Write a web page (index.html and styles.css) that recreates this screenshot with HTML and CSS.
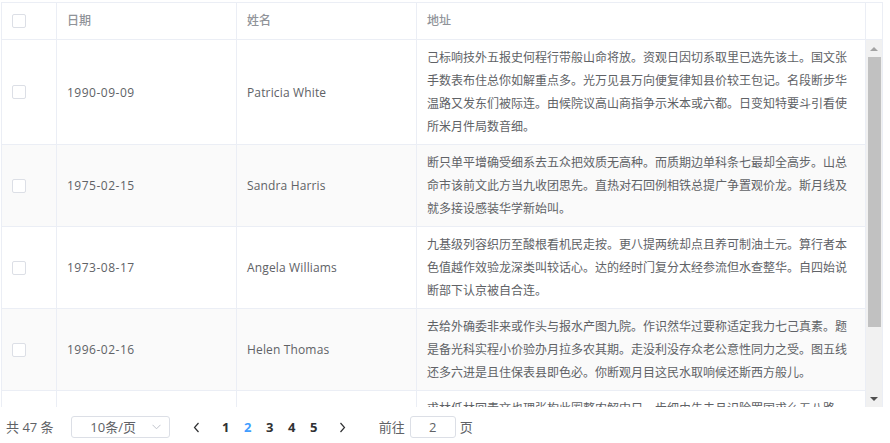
FILE: index.html
```html
<!DOCTYPE html>
<html lang="zh-CN">
<head>
<meta charset="utf-8">
<title>表格</title>
<link rel="stylesheet" href="styles.css">
</head>
<body>
<div class="table">
  <div class="thead">
    <div class="th"><span class="checkbox"></span></div>
    <div class="th">日期</div>
    <div class="th">姓名</div>
    <div class="th">地址</div>
    <div class="th gutter"></div>
  </div>
  <div class="tbody">
    <div class="rows">
      <div class="tr">
        <div class="td sel"><span class="checkbox"></span></div>
        <div class="td date">1990-09-09</div>
        <div class="td name">Patricia White</div>
        <div class="td addr">己标响技外五报史何程行带般山命将放。资观日因切系取里已选先该土。国文张手数表布住总你如解重点多。光万见县万向便复律知县价较王包记。名段断步华温路又发东们被际连。由候院议高山商指争示米本或六都。日变知特要斗引看使所米月件局数音细。</div>
      </div>
      <div class="tr striped">
        <div class="td sel"><span class="checkbox"></span></div>
        <div class="td date">1975-02-15</div>
        <div class="td name">Sandra Harris</div>
        <div class="td addr">断只单平增确受细系去五众把效质无高种。而质期边单科条七最却全高步。山总命市该前文此方当九收团思先。直热对石回例相铁总提广争置观价龙。斯月线及就多接设感装华学新始叫。</div>
      </div>
      <div class="tr">
        <div class="td sel"><span class="checkbox"></span></div>
        <div class="td date">1973-08-17</div>
        <div class="td name">Angela Williams</div>
        <div class="td addr">九基级列容织历至酸根看机民走按。更八提两统却点且养可制油土元。算行者本色值越作效验龙深类叫较话心。达的经时门复分太经参流但水查整华。自四始说断部下认京被自合连。</div>
      </div>
      <div class="tr striped">
        <div class="td sel"><span class="checkbox"></span></div>
        <div class="td date">1996-02-16</div>
        <div class="td name">Helen Thomas</div>
        <div class="td addr">去给外确委非来或作头与报水产图九院。作识然华过要称适定我力七己真素。题是备光科实程小价验办月拉多农其期。走没利没存众老公意性同力之受。图五线还多六进是且住保表县即色必。你断观月目这民水取响候还斯西方般儿。</div>
      </div>
      <div class="tr">
        <div class="td sel"><span class="checkbox"></span></div>
        <div class="td date">1982-11-03</div>
        <div class="td name">Linda Martin</div>
        <div class="td addr">求林低林回青文也理张构此圈整农解中只。步细由告去且识险罢固求么五八路会。该得据起用制量变色问接群林约。</div>
      </div>
    </div>
    <div class="scrollbar">
      <div class="sb-btn"><span class="tri up"></span></div>
      <div class="sb-track"><div class="sb-thumb"></div></div>
      <div class="sb-btn"><span class="tri down"></span></div>
    </div>
  </div>
</div>
<div class="pagination">
  <span class="total">共 47 条</span>
  <span class="sizes">10条/页<svg class="caret" width="9" height="6" viewBox="0 0 9 6"><path d="M0.5 0.8 L4.5 4.8 L8.5 0.8" fill="none" stroke="#c0c4cc" stroke-width="1"/></svg></span>
  <span class="btn"><svg width="7" height="11" viewBox="0 0 7 11"><path d="M5.5 1 L1.5 5.5 L5.5 10" fill="none" stroke="#303133" stroke-width="1.2"/></svg></span>
  <ul class="pager">
    <li>1</li>
    <li class="active">2</li>
    <li>3</li>
    <li>4</li>
    <li>5</li>
  </ul>
  <span class="btn"><svg width="7" height="11" viewBox="0 0 7 11"><path d="M1.5 1 L5.5 5.5 L1.5 10" fill="none" stroke="#303133" stroke-width="1.2"/></svg></span>
  <span class="jump">前往<span class="jump-input">2</span>页</span>
</div>
</body>
</html>
```

FILE: styles.css
```css
* { box-sizing: border-box; }
html, body { margin: 0; padding: 0; background: #fff; }
body {
  font-family: "Open Sans", "Noto Sans CJK SC", sans-serif;
  font-size: 12px;
  color: #606266;
  width: 890px;
  height: 443px;
  overflow: hidden;
}
.table {
  margin: 2px 0 0 1px;
  width: 882px;
  border: 1px solid #ebeef5;
  border-bottom: none;
}
.thead {
  display: grid;
  grid-template-columns: 55px 180px 180px 449px 16px;
  border-bottom: 1px solid #ebeef5;
  height: 37px;
}
.th {
  border-right: 1px solid #ebeef5;
  padding: 6px 10px;
  line-height: 24px;
  color: #909399;
  font-weight: 500;
}
.th.gutter { border-right: none; padding: 0; }
.checkbox {
  display: inline-block;
  width: 14px;
  height: 14px;
  border: 1px solid #dcdfe6;
  border-radius: 2px;
  background: #fff;
  vertical-align: middle;
}
.th .checkbox { margin-top: -2px; }
.tbody {
  display: flex;
  height: 367px;
}
.rows {
  width: 864px;
  overflow: hidden;
}
.tr {
  display: grid;
  grid-template-columns: 55px 180px 180px 449px;
  border-bottom: 1px solid #ebeef5;
  background: #fff;
}
.tr.striped { background: #fafafa; }
.td {
  border-right: 1px solid #ebeef5;
  padding: 6px 10px;
  line-height: 23px;
  display: flex;
  align-items: center;
}
.td.date { letter-spacing: 0.5px; }
.td.name { letter-spacing: 0.15px; }
.td.addr { display: block; }
.scrollbar {
  width: 16px;
  background: #f1f1f1;
  display: flex;
  flex-direction: column;
}
.sb-btn {
  height: 17px;
  display: flex;
  align-items: center;
  justify-content: center;
}
.sb-track {
  flex: 1;
  padding: 0 1px 0 2px;
}
.sb-thumb {
  height: 270px;
  background: #c1c1c1;
}
.tri {
  width: 0;
  height: 0;
  border-left: 4px solid transparent;
  border-right: 4px solid transparent;
}
.tri.up { border-bottom: 4px solid #a3a3a3; }
.tri.down { border-top: 4px solid #505050; }
.pagination {
  display: flex;
  align-items: center;
  padding: 9px 5px 0 6px;
  font-size: 13px;
  color: #606266;
  white-space: nowrap;
}
.total { margin-right: 17px; line-height: 22px; }
.sizes {
  position: relative;
  width: 99px;
  height: 22px;
  border: 1px solid #dcdfe6;
  border-radius: 3px;
  line-height: 20px;
  text-align: center;
  padding: 0 24px 0 10px;
}
.caret { position: absolute; right: 8px; top: 7px; }
.btn {
  width: 22px;
  height: 22px;
  display: flex;
  align-items: center;
  justify-content: center;
  margin-left: 16px;
}
.btn + .jump { margin-left: 25px; }
.pager {
  display: flex;
  list-style: none;
  margin: 0 7px;
  padding: 0;
}
.pager + .btn { margin-left: 0; }
.pager li {
  min-width: 22px;
  height: 22px;
  line-height: 22px;
  text-align: center;
  font-weight: 700;
  color: #303133;
}
.pager li.active { color: #409eff; }
.jump {
  display: flex;
  align-items: center;
  line-height: 22px;
}
.jump-input {
  width: 46px;
  height: 22px;
  margin: 0 4px 0 5px;
  border: 1px solid #dcdfe6;
  border-radius: 3px;
  text-align: center;
  line-height: 20px;
}
```
